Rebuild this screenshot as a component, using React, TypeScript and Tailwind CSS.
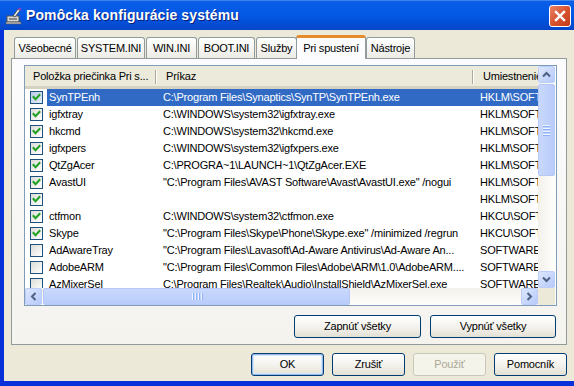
import React from "react";

type Row = { name: string; cmd: string; loc: string; checked: boolean; selected?: boolean };

const rows: Row[] = [
  { name: "SynTPEnh", cmd: "C:\\Program Files\\Synaptics\\SynTP\\SynTPEnh.exe", loc: "HKLM\\SOFTWARE", checked: true, selected: true },
  { name: "igfxtray", cmd: "C:\\WINDOWS\\system32\\igfxtray.exe", loc: "HKLM\\SOFTWARE", checked: true },
  { name: "hkcmd", cmd: "C:\\WINDOWS\\system32\\hkcmd.exe", loc: "HKLM\\SOFTWARE", checked: true },
  { name: "igfxpers", cmd: "C:\\WINDOWS\\system32\\igfxpers.exe", loc: "HKLM\\SOFTWARE", checked: true },
  { name: "QtZgAcer", cmd: "C:\\PROGRA~1\\LAUNCH~1\\QtZgAcer.EXE", loc: "HKLM\\SOFTWARE", checked: true },
  { name: "AvastUI", cmd: "\"C:\\Program Files\\AVAST Software\\Avast\\AvastUI.exe\" /nogui", loc: "HKLM\\SOFTWARE", checked: true },
  { name: "", cmd: "", loc: "HKLM\\SOFTWARE", checked: true },
  { name: "ctfmon", cmd: "C:\\WINDOWS\\system32\\ctfmon.exe", loc: "HKCU\\SOFTWARE", checked: true },
  { name: "Skype", cmd: "\"C:\\Program Files\\Skype\\Phone\\Skype.exe\" /minimized /regrun", loc: "HKCU\\SOFTWARE", checked: true },
  { name: "AdAwareTray", cmd: "\"C:\\Program Files\\Lavasoft\\Ad-Aware Antivirus\\Ad-Aware An...", loc: "SOFTWARE", checked: false },
  { name: "AdobeARM", cmd: "\"C:\\Program Files\\Common Files\\Adobe\\ARM\\1.0\\AdobeARM....", loc: "SOFTWARE", checked: false },
  { name: "AzMixerSel", cmd: "C:\\Program Files\\Realtek\\Audio\\InstallShield\\AzMixerSel.exe", loc: "SOFTWARE", checked: false },
];

const tabs: { label: string; w: string }[] = [
  { label: "Všeobecné", w: "w-[62px]" },
  { label: "SYSTEM.INI", w: "w-[68px]" },
  { label: "WIN.INI", w: "w-[51px]" },
  { label: "BOOT.INI", w: "w-[57px]" },
  { label: "Služby", w: "w-[41px]" },
  { label: "Pri spustení", w: "w-[70px]" },
  { label: "Nástroje", w: "w-[49px]" },
];

function CheckBox({ checked, selected }: { checked: boolean; selected?: boolean }) {
  return (
    <div
      className={`w-[13px] h-[13px] border border-[#1c5180] flex items-center justify-center ${
        selected ? "bg-gradient-to-br from-[#b9c9e6] to-[#e4ecf8]" : "bg-gradient-to-br from-[#dcdcd7] to-white"
      }`}
    >
      {checked && (
        <svg width="11" height="11" viewBox="0 0 11 11">
          <path d="M2.5 5 L4.5 7.2 L8.5 3" stroke="#21a121" strokeWidth="2" fill="none" strokeLinecap="square" />
        </svg>
      )}
    </div>
  );
}

function Arrow({ dir }: { dir: "up" | "down" | "left" | "right" }) {
  const rot = { up: 0, down: 180, left: -90, right: 90 }[dir];
  return (
    <svg width="9" height="9" viewBox="0 0 9 9" style={{ transform: `rotate(${rot}deg)` }}>
      <path d="M1 6.5 L4.5 3 L8 6.5" stroke="#4d6185" strokeWidth="2" fill="none" />
    </svg>
  );
}

function ScrollBtn({ dir }: { dir: "up" | "down" | "left" | "right" }) {
  return (
    <div className="w-[17px] h-[17px] shrink-0 rounded-[2px] border border-[#bccdf9] bg-gradient-to-br from-[#dce6fd] to-[#b6cafa] flex items-center justify-center">
      <Arrow dir={dir} />
    </div>
  );
}

function XpButton({ label, w, isDefault, disabled }: { label: string; w: string; isDefault?: boolean; disabled?: boolean }) {
  return (
    <div
      className={`${w} h-[23px] rounded-[3px] border flex items-center justify-center text-[11px] ${
        disabled
          ? "border-[#c9c7ba] bg-[#f5f4ea] text-[#aca899]"
          : "border-[#003c74] bg-gradient-to-b from-white via-[#f4f3ee] to-[#e3e0d4] text-black"
      } ${isDefault ? "shadow-[inset_0_0_0_1px_#98b8ea,inset_0_0_0_2px_#cee7ff]" : ""}`}
    >
      {label}
    </div>
  );
}

export default function App() {
  return (
    <div className="w-[574px] h-[386px] overflow-hidden flex flex-col bg-[#0831d9] font-['Liberation_Sans',Arial,sans-serif] text-[11px] text-black">
      {/* Title bar */}
      <div className="h-[30px] shrink-0 flex items-center bg-gradient-to-b from-[#0a5ee8] via-[#0257e4] to-[#0546c8] border-t border-[#3d83f0]">
        <div className="w-[26px] pl-[5px] flex items-center">
          <svg width="18" height="18" viewBox="0 0 18 18">
            <rect x="2" y="9" width="12" height="6" fill="#d8d8d8" stroke="#555" strokeWidth="1" />
            <rect x="4" y="11" width="8" height="2" fill="#888" />
            <rect x="1" y="15" width="15" height="2" fill="#bbb" stroke="#555" strokeWidth="0.6" />
            <path d="M8 9 L13 2 L15 3.5 L10 10 Z" fill="#e6e6e6" stroke="#444" strokeWidth="0.8" />
            <path d="M13 2 L14.5 0.5 L16.5 2 L15 3.5 Z" fill="#9b3fbf" />
          </svg>
        </div>
        <div className="text-white font-bold text-[14px] font-['Liberation_Sans',Arial,sans-serif] tracking-[0.1px] [text-shadow:1px_1px_0_#0a1e7a]">
          Pomôcka konfigurácie systému
        </div>
        <div className="ml-auto mr-[3px] w-[22px] h-[22px] rounded-[3px] border border-white bg-gradient-to-br from-[#e7836a] via-[#d8542f] to-[#c13b16] flex items-center justify-center">
          <svg width="12" height="12" viewBox="0 0 12 12">
            <path d="M2 2 L10 10 M10 2 L2 10" stroke="white" strokeWidth="2.4" strokeLinecap="square" />
          </svg>
        </div>
      </div>

      {/* Body */}
      <div className="flex-1 ml-[4px] mb-[5px] bg-[#ece9d8] flex flex-col pl-[7px] tracking-[-0.2px]">
        {/* Tabs */}
        <div className="flex items-end h-[28px] pl-[3px] relative z-10 whitespace-nowrap">
          {tabs.map((t) => {
            const sel = t.label === "Pri spustení";
            return sel ? (
              <div
                key={t.label}
                className={`${t.w} h-[24px] -mb-px -ml-[2px] flex justify-center items-start pt-[2px] bg-[#fcfcfe] border-x border-[#919b9c] rounded-t-[3px] relative z-10 border-t-[3px] border-t-[#e68b2c]`}
              >
                {t.label}
              </div>
            ) : (
              <div
                key={t.label}
                className={`${t.w} h-[21px] mr-px flex justify-center items-center border border-b-0 border-[#919b9c] rounded-t-[3px] bg-gradient-to-b from-white to-[#ecebe6]`}
              >
                {t.label}
              </div>
            );
          })}
        </div>
        {/* Pane */}
        <div className="w-[556px] h-[287px] border border-[#919b9c] bg-gradient-to-b from-[#fcfcfe] to-[#f4f3ee] pt-[6px] pl-[12px] flex flex-col">
          {/* Listview */}
          <div className="w-[533px] h-[241px] border border-[#7f9db9] bg-white flex flex-col overflow-hidden">
            <div className="flex h-[222px]">
              <div className="w-[513px] overflow-hidden flex flex-col">
                {/* Header */}
                <div className="h-[23px] shrink-0 flex bg-[#ebeadb] border-b-[3px] border-[#d6d2c2] whitespace-nowrap">
                  <div className="w-[132px] shrink-0 flex items-center pl-[8px] relative">
                    Položka priečinka Pri s...
                    <div className="absolute right-0 top-[4px] h-[14px] w-[2px] border-l border-[#aca899] border-r border-r-white" />
                  </div>
                  <div className="w-[317px] shrink-0 flex items-center pl-[9px] relative">
                    Príkaz
                    <div className="absolute right-0 top-[4px] h-[14px] w-[2px] border-l border-[#aca899] border-r border-r-white" />
                  </div>
                  <div className="w-[64px] shrink-0 flex items-center pl-[9px] overflow-hidden">Umiestnenie</div>
                </div>
                {/* Rows */}
                <div className="flex flex-col">
                  {rows.map((r, i) => (
                    <div key={i} className="h-[17px] shrink-0 flex items-center whitespace-nowrap">
                      <div className="w-[22px] shrink-0 pl-[5px] flex items-center">
                        <CheckBox checked={r.checked} selected={r.selected} />
                      </div>
                      <div className={`flex-1 flex h-full items-center ${r.selected ? "bg-[#316ac5] text-white" : ""}`}>
                        <div className="w-[110px] shrink-0 pl-[2px] overflow-hidden">{r.name}</div>
                        <div className="w-[317px] shrink-0 pl-[6px] overflow-hidden">{r.cmd}</div>
                        <div className="w-[64px] shrink-0 pl-[6px] overflow-hidden">{r.loc}</div>
                      </div>
                    </div>
                  ))}
                </div>
              </div>
              {/* Vertical scrollbar */}
              <div className="w-[17px] h-[222px] bg-gradient-to-r from-[#f3f1ec] to-[#fefefb] flex flex-col">
                <ScrollBtn dir="up" />
                <div className="flex-1 pt-[1px]">
                  <div className="h-[92px] rounded-[2px] border border-[#b5c8f6] bg-gradient-to-r from-[#c9d8fc] to-[#b9ccfa] flex flex-col items-center justify-center gap-[2px]">
                    {[0, 1, 2, 3].map((k) => (
                      <div key={k} className="w-[7px] h-px bg-[#eef4fe] shadow-[0_1px_0_#8cb0f8]" />
                    ))}
                  </div>
                </div>
                <ScrollBtn dir="down" />
              </div>
            </div>
            {/* Horizontal scrollbar */}
            <div className="flex h-[17px]">
              <div className="w-[513px] flex bg-gradient-to-b from-[#f3f1ec] to-[#fefefb]">
                <ScrollBtn dir="left" />
                <div className="flex-1 pl-px">
                  <div className="w-[307px] h-[17px] rounded-[2px] border border-[#b5c8f6] bg-gradient-to-b from-[#c9d8fc] to-[#b9ccfa] flex items-center justify-center gap-[2px]">
                    {[0, 1, 2, 3].map((k) => (
                      <div key={k} className="h-[7px] w-px bg-[#eef4fe] shadow-[1px_0_0_#8cb0f8]" />
                    ))}
                  </div>
                </div>
                <ScrollBtn dir="right" />
              </div>
              <div className="w-[17px] bg-[#ece9d8]" />
            </div>
          </div>
          {/* Enable/disable buttons */}
          <div className="flex justify-end gap-[9px] mt-[9px] w-[533px] pr-[1px]">
            <XpButton label="Zapnúť všetky" w="w-[127px]" />
            <XpButton label="Vypnúť všetky" w="w-[126px]" />
          </div>
        </div>
        {/* Bottom buttons */}
        <div className="flex gap-[8px] mt-[8px] w-[556px] justify-end">
          <XpButton label="OK" w="w-[73px]" isDefault />
          <XpButton label="Zrušiť" w="w-[73px]" />
          <XpButton label="Použiť" w="w-[73px]" disabled />
          <XpButton label="Pomocník" w="w-[73px]" />
        </div>
      </div>
    </div>
  );
}
